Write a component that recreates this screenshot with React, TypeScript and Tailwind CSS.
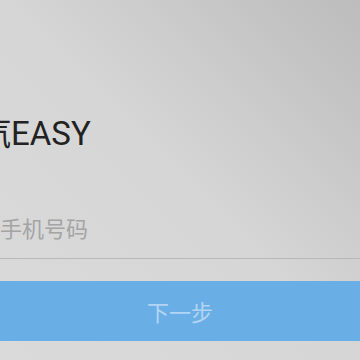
import React from 'react';

export default function App() {
  return (
    <div className="h-[360px] w-[360px] overflow-hidden bg-linear-to-bl from-[#bcbcbc] via-[#d6d6d6] to-[#dadada] font-['Roboto','Noto_Sans_CJK_SC',sans-serif]">
      <div className="pt-[114px]">
        {/* title, clipped on the left like the screenshot */}
        <div className="h-[40px] whitespace-nowrap text-[33px] leading-[40px] text-[#222222] -ml-[22px]">
          汽EASY
        </div>

        <div className="mt-[52px] border-b border-[#b8b8b8] pb-[10px]">
          <input
            type="tel"
            placeholder="手机号码"
            className="block h-[42px] w-full bg-transparent text-[22px] leading-[42px] text-[#333] outline-none placeholder:text-[#a4a4a4] font-['Noto_Sans_CJK_SC',sans-serif]"
          />
        </div>

        <button className="mt-[22px] flex h-[60px] w-full items-center justify-center bg-[#6aaee6] text-[22px] text-[#b3d5f3] font-['Noto_Sans_CJK_SC',sans-serif]">
          下一步
        </button>
      </div>
    </div>
  );
}
